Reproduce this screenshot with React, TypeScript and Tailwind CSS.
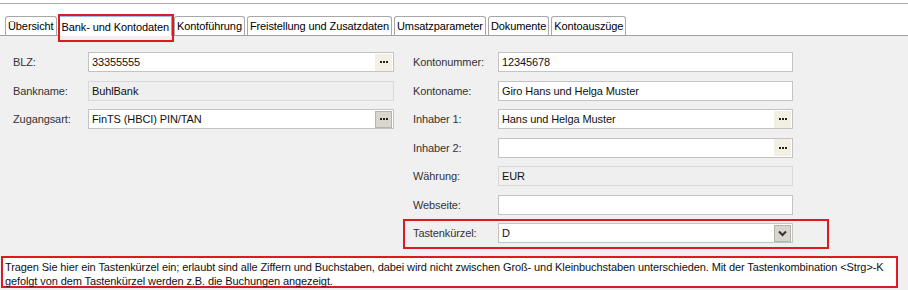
import React from 'react';

const tabs = [
  'Übersicht',
  'Bank- und Kontodaten',
  'Kontoführung',
  'Freistellung und Zusatzdaten',
  'Umsatzparameter',
  'Dokumente',
  'Kontoauszüge',
];

function Dots({ pressed }: { pressed?: boolean }) {
  return (
    <div
      className={
        pressed
          ? 'w-[17px] h-[17px] flex items-center justify-center gap-[1px] bg-[#d8d6cf] border border-[#b5b3ab]'
          : 'w-[17px] h-[17px] flex items-center justify-center gap-[1px] bg-[#f1f0e3]'
      }
    >
      <span className="w-[2px] h-[2px] bg-[#222]" />
      <span className="w-[2px] h-[2px] bg-[#222]" />
      <span className="w-[2px] h-[2px] bg-[#222]" />
    </div>
  );
}

function Field(props: {
  label: string;
  value?: string;
  labelW: string;
  inputW: string;
  disabled?: boolean;
  button?: 'dots' | 'pressed' | 'combo';
}) {
  const { label, value, labelW, inputW, disabled, button } = props;
  return (
    <div className="flex items-center h-[20px]">
      <div className={`${labelW} text-[#333]`}>{label}</div>
      <div
        className={
          (disabled ? 'bg-[#efefef] border-[#d9d9d9] ' : 'bg-white border-[#c3c3c3] ') +
          `${inputW} h-[20px] border flex items-center justify-between pl-[3px] pr-[1px]`
        }
      >
        <span className="text-[#111]">{value}</span>
        {button === 'dots' && <Dots />}
        {button === 'pressed' && <Dots pressed />}
        {button === 'combo' && (
          <div className="w-[17px] h-[17px] flex items-center justify-center bg-[#d8d6cf] border border-[#b5b3ab]">
            <svg width="9" height="7" viewBox="0 0 9 7">
              <path d="M1 1.5 L4.5 5 L8 1.5" stroke="#333" strokeWidth="2" fill="none" />
            </svg>
          </div>
        )}
      </div>
    </div>
  );
}

export default function App() {
  return (
    <div
      className="w-[908px] h-[290px] bg-[#f0f0f0] text-[11px] leading-[14px] tracking-[-0.1px] overflow-hidden relative"
      style={{ fontFamily: '"Liberation Sans", Arial, sans-serif' }}
    >
      {/* tab strip */}
      <div className="bg-white h-[36px] pt-[3px]">
        <div className="h-[1px] bg-[#a9a9a9]" />
        <div className="flex items-end gap-[2px] pl-[5px] pt-[12px] border-b border-[#a0a0a0] h-[32px]">
          {tabs.map((t, i) => {
            const active = i === 1;
            return active ? (
              <div key={t} className="relative -mb-[1px]">
                <div className="h-[21px] px-[2px] flex items-center bg-white border border-b-0 border-[#9c9c9c] border-t-[2px] border-t-[#9bbcec] rounded-t-[2px]">
                  {t}
                </div>
                <div className="absolute -left-[1px] -right-[2px] -top-[1px] -bottom-[6px] border-2 border-[#dc1a22]" />
              </div>
            ) : (
              <div
                key={t}
                className="h-[19px] px-[2px] flex items-center bg-white border border-b-0 border-[#a8a8a8] rounded-t-[3px]"
              >
                {t}
              </div>
            );
          })}
        </div>
      </div>

      {/* form */}
      <div className="flex pt-[16px] h-[220px]">
        <div className="flex flex-col gap-[8.5px] pl-[13px] w-[400px]">
          <Field label="BLZ:" value="33355555" labelW="w-[75px]" inputW="w-[306px]" button="dots" />
          <Field label="Bankname:" value="BuhlBank" labelW="w-[75px]" inputW="w-[306px]" disabled />
          <Field label="Zugangsart:" value="FinTS (HBCI) PIN/TAN" labelW="w-[75px]" inputW="w-[306px]" button="pressed" />
        </div>
        <div className="flex flex-col gap-[8.5px] pl-[13px]">
          <Field label="Kontonummer:" value="12345678" labelW="w-[85px]" inputW="w-[295px]" />
          <Field label="Kontoname:" value="Giro Hans und Helga Muster" labelW="w-[85px]" inputW="w-[295px]" />
          <Field label="Inhaber 1:" value="Hans und Helga Muster" labelW="w-[85px]" inputW="w-[295px]" button="dots" />
          <Field label="Inhaber 2:" value="" labelW="w-[85px]" inputW="w-[295px]" button="dots" />
          <Field label="Währung:" value="EUR" labelW="w-[85px]" inputW="w-[295px]" disabled />
          <Field label="Webseite:" value="" labelW="w-[85px]" inputW="w-[295px]" />
          <div className="-ml-[10px] -mt-[4px] w-[426px] h-[30px] border-2 border-[#dc1a22] pl-[8px] pt-[2px]">
            <Field label="Tastenkürzel:" value="D" labelW="w-[85px]" inputW="w-[295px]" button="combo" />
          </div>
        </div>
      </div>

      {/* help text */}
      <div className="flex items-start">
        <div className="ml-[1px] w-[897px] h-[32px] bg-white border-2 border-[#dc1a22] px-[2px] pt-[2px] text-[#111] whitespace-nowrap">
          Tragen Sie hier ein Tastenkürzel ein; erlaubt sind alle Ziffern und Buchstaben, dabei wird nicht zwischen Groß- und
          Kleinbuchstaben unterschieden. Mit der Tastenkombination &lt;Strg&gt;-K
          <br />
          gefolgt von dem Tastenkürzel werden z.B. die Buchungen angezeigt.
        </div>
      </div>
    </div>
  );
}
